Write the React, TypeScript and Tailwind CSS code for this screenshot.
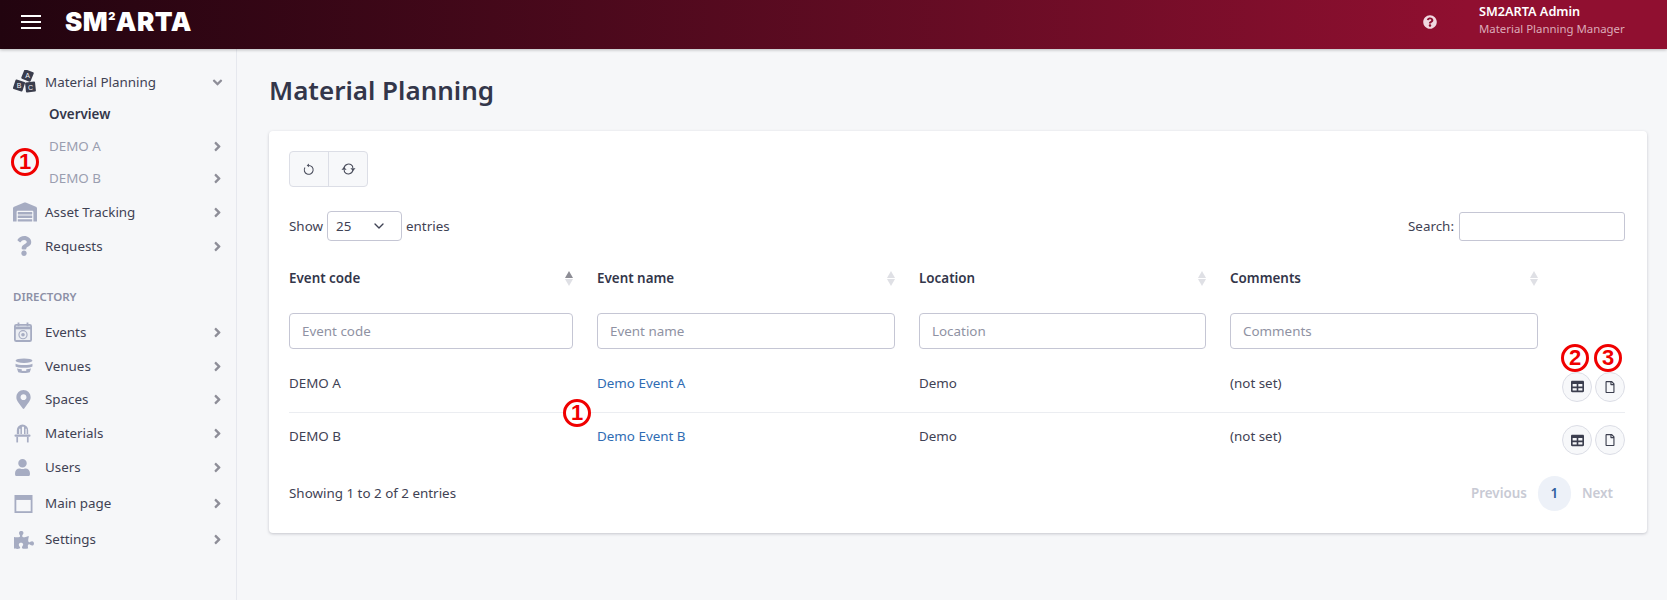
import React from 'react';
import { FaQuestion, FaMapMarkerAlt, FaUser, FaPuzzlePiece, FaTable, FaRegFile, FaQuestionCircle, FaAngleRight, FaAngleDown, FaWarehouse } from 'react-icons/fa';
import { ChevronDown } from 'lucide-react';

const ICON = 'text-[#a6acc2]';
const GRID = 'grid grid-cols-[284px_298px_287px_308px_1fr] gap-x-[24px]';

function Blocks() {
  return (
    <svg viewBox="0 0 24 24" className="h-[24px] w-[24px]">
      <g fill="#3a3d4d">
        <rect x="9.500" y="0.500" width="10" height="10" rx="1" transform="rotate(22 14.500 5.500)" />
        <rect x="1" y="10.500" width="10" height="10" rx="1" transform="rotate(18 6 15.500)" />
        <rect x="12.500" y="12" width="10" height="10" rx="1" transform="rotate(-6 17.500 17)" />
      </g>
      <g fill="#f5f6f9" fontSize="7" fontFamily="Liberation Sans, sans-serif" textAnchor="middle">
        <text x="14.500" y="8">A</text>
        <text x="6" y="18">B</text>
        <text x="17.500" y="19.500">C</text>
      </g>
    </svg>
  );
}

function CalendarBall() {
  return (
    <svg viewBox="0 0 20 22" className="h-[20px] w-[18px]" fill="none">
      <rect x="1" y="3" width="18" height="18" rx="1.500" fill="#eceef3" stroke="#a6acc2" strokeWidth="2" />
      <path d="M1 6.500h18" stroke="#a6acc2" strokeWidth="3" />
      <path d="M5 0.500v4M15 0.500v4" stroke="#a6acc2" strokeWidth="2" />
      <circle cx="10" cy="14" r="4.500" stroke="#a6acc2" strokeWidth="1.300" />
      <circle cx="10" cy="14" r="2" fill="#a6acc2" />
    </svg>
  );
}

function Stadium() {
  return (
    <svg viewBox="0 0 20 18" className="h-[16px] w-[20px]" fill="none">
      <ellipse cx="10" cy="3" rx="9.500" ry="2.500" fill="#a6acc2" />
      <path d="M0.500 6.500c2 2 17 2 19 0v3c-2 2-17 2-19 0z" fill="#a6acc2" />
      <path d="M2 11.500c2 1.500 14 1.500 16 0l-1.500 4.500c-2 1-11 1-13 0z" fill="#a6acc2" />
      <rect x="7.500" y="11.500" width="5" height="3" fill="#f6f7f9" />
    </svg>
  );
}

function Chair() {
  return (
    <svg viewBox="0 0 18 20" className="h-[20px] w-[17px]" fill="#a6acc2">
      <path d="M3 11V7a6 6 0 0 1 12 0v4h-1.600V5.500h-1.200V11h-1.600V3.400H8.400V11H6.800V5.500H5.500V11z" />
      <rect x="0.500" y="11.500" width="17" height="2.500" rx="1.200" />
      <rect x="2.500" y="14" width="1.800" height="6" />
      <rect x="13.700" y="14" width="1.800" height="6" />
    </svg>
  );
}

function WindowIcon() {
  return (
    <svg viewBox="0 0 20 20" className="h-[18px] w-[19px]" fill="none">
      <rect x="1" y="1" width="18" height="18" stroke="#a6acc2" strokeWidth="2" />
      <rect x="1" y="1" width="18" height="4.500" fill="#a6acc2" />
    </svg>
  );
}

function UndoIcon() {
  return (
    <svg viewBox="0 0 14 14" className="h-[13px] w-[13px]" fill="none" stroke="#4a4d5c" strokeWidth="1.100">
      <path d="M6 2.600a4.800 4.800 0 1 1-3.900 2.200" />
      <path d="M6.400 0.600 4 2.600l2.400 2z" fill="#4a4d5c" stroke="none" />
    </svg>
  );
}

function SyncIcon() {
  return (
    <svg viewBox="0 0 16 14" className="h-[14px] w-[15px]" fill="none" stroke="#4a4d5c" strokeWidth="1.200">
      <path d="M3.200 6a5 5 0 0 1 9-2.200l.4 2" />
      <path d="M12.800 8a5 5 0 0 1-9 2.200l-.4-2" />
      <path d="M10 6.200h5.500L12.800 9.200zM0.500 7.800H6L3.200 4.800z" fill="#4a4d5c" stroke="none" />
    </svg>
  );
}

type NavItem = { label: string; icon: React.ReactNode; h: string };

const topItems: NavItem[] = [
  { label: 'Asset Tracking', icon: <FaWarehouse className={`-ml-[1px] text-[24px] ${ICON}`} />, h: 'h-[34px] mt-[1px]' },
  { label: 'Requests', icon: <FaQuestion className={`text-[20px] ${ICON}`} />, h: 'h-[34px]' },
];

const dirItems: NavItem[] = [
  { label: 'Events', icon: <CalendarBall />, h: 'h-[34px]' },
  { label: 'Venues', icon: <Stadium />, h: 'h-[34px]' },
  { label: 'Spaces', icon: <FaMapMarkerAlt className={`text-[19px] ${ICON}`} />, h: 'h-[33px]' },
  { label: 'Materials', icon: <Chair />, h: 'h-[34px]' },
  { label: 'Users', icon: <FaUser className={`text-[17px] ${ICON}`} />, h: 'h-[35px]' },
  { label: 'Main page', icon: <WindowIcon />, h: 'h-[37px]' },
  { label: 'Settings', icon: <FaPuzzlePiece className={`text-[20px] ${ICON}`} />, h: 'h-[35px]' },
];

function SideRow({ item }: { item: NavItem }) {
  return (
    <div className={`flex items-center pr-[11px] pl-[13px] ${item.h}`}>
      <span className="flex w-[32px] justify-start pl-[1px]">{item.icon}</span>
      <span className="flex-1 text-[#3f4254]">{item.label}</span>
      <FaAngleRight className="text-[15px] text-[#8e8e98]" />
    </div>
  );
}

function SubRow({ label, bold, arrow }: { label: string; bold?: boolean; arrow?: boolean }) {
  return (
    <div className="flex h-[32px] items-center pr-[11px] pl-[49px]">
      <span className={`flex-1 ${bold ? 'font-semibold text-[#33364a]' : 'text-[#9a9eb0]'}`}>{label}</span>
      {arrow && <FaAngleRight className="text-[15px] text-[#8e8e98]" />}
    </div>
  );
}

function Marker({ n, className }: { n: number; className: string }) {
  return (
    <div className={`absolute flex h-[28px] w-[28px] items-center justify-center rounded-full border-[3px] border-[#f00000] font-['Liberation_Sans',sans-serif] text-[22px] leading-none font-bold text-[#f00000] ${className}`}>
      {n}
    </div>
  );
}

function SortHead({ label, active }: { label: string; active?: boolean }) {
  return (
    <div className="flex items-center justify-between">
      <span className="font-semibold text-[#33364a]">{label}</span>
      <span className="flex flex-col gap-[1px]">
        <span className={`h-0 w-0 border-x-[4px] border-b-[7px] border-x-transparent ${active ? 'border-b-[#8d8d95]' : 'border-b-[#dfe0e5]'}`} />
        <span className="h-0 w-0 border-x-[4px] border-t-[7px] border-x-transparent border-t-[#dfe0e5]" />
      </span>
    </div>
  );
}

function FilterInput({ placeholder }: { placeholder: string }) {
  return (
    <input
      placeholder={placeholder}
      className="h-[36px] w-full rounded-[4px] border border-[#c5c6d4] bg-white px-[12px] outline-none placeholder:text-[#8f92a3]"
    />
  );
}

function ActionButtons() {
  return (
    <div className="flex justify-end gap-[3px] pt-[1px]">
      <button className="flex h-[30px] w-[30px] items-center justify-center rounded-full border border-[#dcdee6] bg-[#f7f8fa] text-[#3c3f4f]">
        <FaTable className="text-[13px]" />
      </button>
      <button className="flex h-[30px] w-[30px] items-center justify-center rounded-full border border-[#dcdee6] bg-[#f7f8fa] text-[#3c3f4f]">
        <FaRegFile className="text-[12px]" />
      </button>
    </div>
  );
}

const rows = [
  { code: 'DEMO A', name: 'Demo Event A', border: true },
  { code: 'DEMO B', name: 'Demo Event B', border: false },
];

export default function App() {
  return (
    <div className="relative flex h-[600px] flex-col overflow-hidden bg-[#f6f7f9] font-['Noto_Sans',sans-serif] text-[13.4px] text-[#3f4254]">
      <header className="z-10 flex h-[49px] shrink-0 items-center bg-gradient-to-r from-[#22040f] to-[#900f30] to-[88%] pb-[6px] shadow-[0_1px_3px_rgba(0,0,0,0.25)]">
        <div className="ml-[21px] flex w-[20px] flex-col gap-[4px]">
          <span className="h-[2px] bg-white" />
          <span className="h-[2px] bg-white" />
          <span className="h-[2px] bg-white" />
        </div>
        <div className="ml-[24px] flex items-start font-['Inter',sans-serif] text-[26px] leading-none font-black tracking-[0.5px] text-white">
          <span>SM</span>
          <span className="mt-[2px] text-[11px] leading-none">2</span>
          <span>ARTA</span>
        </div>
        <div className="ml-auto flex items-center gap-[42px]">
          <FaQuestionCircle className="text-[14px] text-[#f0d8e0]" />
          <div className="flex w-[188px] flex-col pb-[3px] leading-[17px]">
            <span className="text-[12.7px] font-semibold text-white">SM2ARTA Admin</span>
            <span className="text-[11.4px] text-[#dcaab8]">Material Planning Manager</span>
          </div>
        </div>
      </header>

      <div className="flex flex-1">
        <aside className="w-[237px] shrink-0 border-r border-[#e6e8ee] pt-[17px]">
          <div className="flex h-[32px] items-center pr-[11px] pl-[13px]">
            <span className="flex w-[32px]"><Blocks /></span>
            <span className="flex-1 text-[#3f4254]">Material Planning</span>
            <FaAngleDown className="text-[15px] text-[#8e8e98]" />
          </div>
          <SubRow label="Overview" bold />
          <SubRow label="DEMO A" arrow />
          <SubRow label="DEMO B" arrow />
          {topItems.map((item) => (
            <SideRow key={item.label} item={item} />
          ))}
          <div className="mt-[26px] mb-[10px] pl-[13px] text-[11.500px] leading-[16px] font-semibold text-[#8c90a6]">DIRECTORY</div>
          {dirItems.map((item) => (
            <SideRow key={item.label} item={item} />
          ))}
        </aside>

        <main className="flex-1 pt-[23px] pr-[23px] pl-[32px]">
          <h1 className="text-[26px] leading-[36px] font-semibold text-[#33364a]">Material Planning</h1>
          <section className="mt-[23px] h-[402px] rounded-[4px] bg-white pt-[20px] pr-[22px] pl-[20px] shadow-[0_1px_3px_rgba(50,50,70,0.25)]">
            <div className="flex h-[36px] w-[79px] rounded-[4px] border border-[#dcdee6] bg-[#f7f8fa]">
              <span className="flex flex-1 items-center justify-center border-r border-[#dcdee6]"><UndoIcon /></span>
              <span className="flex flex-1 items-center justify-center"><SyncIcon /></span>
            </div>

            <div className="mt-[24px] flex h-[30px] items-center justify-between">
              <div className="flex items-center gap-[4px]">
                <span>Show</span>
                <div className="flex h-[30px] w-[75px] items-center justify-between rounded-[4px] border border-[#c5c6d4] pr-[14px] pl-[8px]">
                  <span>25</span>
                  <ChevronDown size={16} />
                </div>
                <span>entries</span>
              </div>
              <div className="flex items-center gap-[5px]">
                <span>Search:</span>
                <input className="h-[29px] w-[166px] rounded-[3px] border border-[#c5c6d4] bg-white outline-none" />
              </div>
            </div>

            <div className={`mt-[27px] ${GRID}`}>
              <SortHead label="Event code" active />
              <SortHead label="Event name" />
              <SortHead label="Location" />
              <SortHead label="Comments" />
              <span />
            </div>

            <div className={`mt-[25px] ${GRID}`}>
              <FilterInput placeholder="Event code" />
              <FilterInput placeholder="Event name" />
              <FilterInput placeholder="Location" />
              <FilterInput placeholder="Comments" />
              <span />
            </div>

            <div className="mt-[11px]">
              {rows.map((r) => (
                <div key={r.code} className={`h-[53px] items-center ${GRID} ${r.border ? 'border-b border-[#ebedf1]' : ''}`}>
                  <span className="pb-[7px]">{r.code}</span>
                  <span className="pb-[7px] text-[#2f6cb3]">{r.name}</span>
                  <span className="pb-[7px]">Demo</span>
                  <span className="pb-[7px]">(not set)</span>
                  <ActionButtons />
                </div>
              ))}
            </div>

            <div className="mt-[9px] flex h-[36px] items-center justify-between">
              <span>Showing 1 to 2 of 2 entries</span>
              <div className="flex items-center pr-[12px] font-semibold text-[#c8cad4]">
                <span>Previous</span>
                <span className="mx-[11px] flex h-[35px] w-[33px] items-center justify-center rounded-full bg-[#edf1f8] text-[#2f5f9e]">1</span>
                <span>Next</span>
              </div>
            </div>
          </section>
        </main>
      </div>

      {/* numbered callouts laid over the screenshot */}
      <Marker n={1} className="top-[148px] left-[11px]" />
      <Marker n={1} className="top-[399px] left-[563px] bg-white" />
      <Marker n={2} className="top-[344px] left-[1561px] bg-white" />
      <Marker n={3} className="top-[344px] left-[1594px] bg-white" />
    </div>
  );
}
